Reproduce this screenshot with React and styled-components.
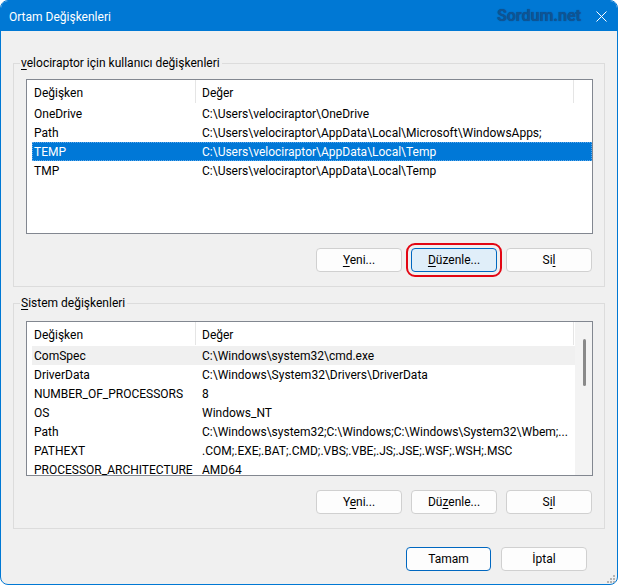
import React from 'react';
import styled, { createGlobalStyle } from 'styled-components';

const GlobalStyle = createGlobalStyle`
  html, body {
    margin: 0;
    padding: 0;
    background: #ffffff;
  }
  body {
    font-family: Roboto, "Segoe UI", "Noto Sans", sans-serif;
    font-size: 12px;
    color: #000;
  }
  u {
    text-underline-offset: 2px;
  }
`;

const Window = styled.div`
  width: 618px;
  height: 585px;
  box-sizing: border-box;
  border: 1px solid #0078d4;
  border-radius: 8px;
  background: #f0f0f0;
  overflow: hidden;
  display: flex;
  flex-direction: column;
`;

const TitleBar = styled.div`
  height: 30px;
  flex-shrink: 0;
  background: #0078d4;
  color: #fff;
  display: flex;
  align-items: center;
  padding: 0 9px 0 8px;
  font-size: 12px;
`;

const Title = styled.span`
  flex: 1;
  padding-top: 1px;
`;

const Watermark = styled.span`
  font-family: Roboto, "Noto Sans", sans-serif;
  font-weight: 700;
  font-size: 16px;
  color: #0f5493;
  text-shadow: 0 0 1px rgba(0, 40, 90, 0.6);
  margin-right: 13px;
  margin-top: -2px;
`;

const CloseButton = styled.button`
  width: 14px;
  height: 14px;
  padding: 0;
  border: none;
  background: none;
  display: flex;
  align-items: center;
  justify-content: center;
`;

const Content = styled.div`
  flex: 1;
  padding: 24px 12px 0 12px;
  display: flex;
  flex-direction: column;
  position: relative;
`;

const Group = styled.fieldset`
  margin: ${p => p.$top || 0}px 0 0 0;
  padding: 0 11px ${p => p.$bottom}px 12px;
  border: 1px solid #dcdcdc;
  min-width: 0;
`;

const Legend = styled.legend`
  padding: 0 2px 0 1px;
  margin-left: -6px;
  line-height: 16px;
  font-size: 12px;
`;

const ListBox = styled.div`
  margin-top: ${p => p.$gap}px;
  height: 155px;
  box-sizing: border-box;
  border: 1px solid #828790;
  background: #fff;
  display: flex;
  overflow: hidden;
`;

const ListBody = styled.div`
  flex: 1;
  padding-left: 5px;
  min-width: 0;
`;

const ColumnGrid = styled.div`
  display: grid;
  grid-template-columns: 164px 378px;
`;

const Header = styled(ColumnGrid)`
  height: 24px;
`;

const HeaderCell = styled.div`
  display: flex;
  align-items: center;
  box-sizing: border-box;
  padding: 2px 0 0 ${p => (p.$first ? 2 : 6)}px;
  border-right: 1px solid #e5e5e5;
  height: 23px;
`;

const Row = styled(ColumnGrid)`
  height: 19px;
  align-items: center;
  box-sizing: border-box;
  background: ${p => (p.$selected ? '#0078d7' : p.$hover ? '#f0f0f0' : 'transparent')};
  color: ${p => (p.$selected ? '#fff' : '#000')};
  border: 1px dotted ${p => (p.$selected ? '#5fa8e8' : 'transparent')};
`;

const Cell = styled.div`
  padding: 2px 0 0 ${p => (p.$first ? 1 : 5)}px;
  white-space: nowrap;
  overflow: hidden;
  line-height: 15px;
`;

const Scrollbar = styled.div`
  width: 17px;
  flex-shrink: 0;
  background: #f3f3f3;
  display: flex;
  justify-content: center;
  padding-top: 17px;
  box-sizing: border-box;
`;

const ScrollThumb = styled.div`
  width: 3px;
  height: 47px;
  background: #8a8a8a;
  border-radius: 2px;
  margin-left: 1px;
`;

const ButtonRow = styled.div`
  display: flex;
  justify-content: flex-end;
  gap: ${p => p.$gap || 9}px;
  margin-top: ${p => p.$top || 0}px;
  padding-right: ${p => p.$right || 0}px;
`;

const Button = styled.button`
  width: ${p => p.$width || 86}px;
  height: 24px;
  box-sizing: border-box;
  border-radius: 4px;
  border: 1px solid ${p => (p.$focused || p.$default ? '#0067c0' : '#d0d0d0')};
  background: ${p => (p.$focused ? '#e0eef9' : '#fdfdfd')};
  font-family: inherit;
  font-size: 12px;
  color: #000;
  padding: 0 0 1px 0;
  outline: ${p => (p.$marked ? '2px solid #e30613' : 'none')};
  outline-offset: 3px;
`;

const Footer = styled.div`
  margin-top: 18px;
`;

const Grip = styled.svg`
  position: absolute;
  right: 2px;
  bottom: 1px;
`;

const userVars = [
  ['OneDrive', 'C:\\Users\\velociraptor\\OneDrive'],
  ['Path', 'C:\\Users\\velociraptor\\AppData\\Local\\Microsoft\\WindowsApps;'],
  ['TEMP', 'C:\\Users\\velociraptor\\AppData\\Local\\Temp'],
  ['TMP', 'C:\\Users\\velociraptor\\AppData\\Local\\Temp'],
];

const systemVars = [
  ['ComSpec', 'C:\\Windows\\system32\\cmd.exe'],
  ['DriverData', 'C:\\Windows\\System32\\Drivers\\DriverData'],
  ['NUMBER_OF_PROCESSORS', '8'],
  ['OS', 'Windows_NT'],
  ['Path', 'C:\\Windows\\system32;C:\\Windows;C:\\Windows\\System32\\Wbem;...'],
  ['PATHEXT', '.COM;.EXE;.BAT;.CMD;.VBS;.VBE;.JS;.JSE;.WSF;.WSH;.MSC'],
  ['PROCESSOR_ARCHITECTURE', 'AMD64'],
];

function VarList({ rows, gap, selected, hover, scroll }) {
  return (
    <ListBox $gap={gap}>
      <ListBody>
        <Header>
          <HeaderCell $first>Değişken</HeaderCell>
          <HeaderCell>Değer</HeaderCell>
        </Header>
        {rows.map(([name, value]) => (
          <Row key={name} $selected={name === selected} $hover={name === hover}>
            <Cell $first>{name}</Cell>
            <Cell>{value}</Cell>
          </Row>
        ))}
      </ListBody>
      {scroll && (
        <Scrollbar>
          <ScrollThumb />
        </Scrollbar>
      )}
    </ListBox>
  );
}

export default function App() {
  return (
    <>
      <GlobalStyle />
      <Window>
        <TitleBar>
          <Title>Ortam Değişkenleri</Title>
          <Watermark>Sordum.net</Watermark>
          <CloseButton aria-label="Kapat">
            <svg width="11" height="11" viewBox="0 0 11 11">
              <path d="M0.5 0.5 L10.5 10.5 M10.5 0.5 L0.5 10.5" stroke="#fff" strokeWidth="1" />
            </svg>
          </CloseButton>
        </TitleBar>
        <Content>
          <Group $bottom={14}>
            <Legend><u>v</u>elociraptor için kullanıcı değişkenleri</Legend>
            <VarList rows={userVars} gap={8} selected="TEMP" />
            <ButtonRow $top={14} $right={1}>
              <Button><u>Y</u>eni...</Button>
              <Button $focused $marked><u>D</u>üzenle...</Button>
              <Button>Si<u>l</u></Button>
            </ButtonRow>
          </Group>
          <Group $top={8} $bottom={14}>
            <Legend><u>S</u>istem değişkenleri</Legend>
            <VarList rows={systemVars} gap={10} hover="ComSpec" scroll />
            <ButtonRow $top={14} $right={1}>
              <Button>Y<u>e</u>ni...</Button>
              <Button>Dü<u>z</u>enle...</Button>
              <Button>S<u>i</u>l</Button>
            </ButtonRow>
          </Group>
          <Footer>
            <ButtonRow $right={18} $gap={10}>
              <Button $default $width={85}>Tamam</Button>
              <Button $width={86}>İptal</Button>
            </ButtonRow>
          </Footer>
          <Grip width="9" height="9" viewBox="0 0 9 9">
            <g fill="#b4b4b4">
              <rect x="7" y="1" width="2" height="2" />
              <rect x="4" y="4" width="2" height="2" />
              <rect x="7" y="4" width="2" height="2" />
              <rect x="1" y="7" width="2" height="2" />
              <rect x="4" y="7" width="2" height="2" />
              <rect x="7" y="7" width="2" height="2" />
            </g>
          </Grip>
        </Content>
      </Window>
    </>
  );
}
